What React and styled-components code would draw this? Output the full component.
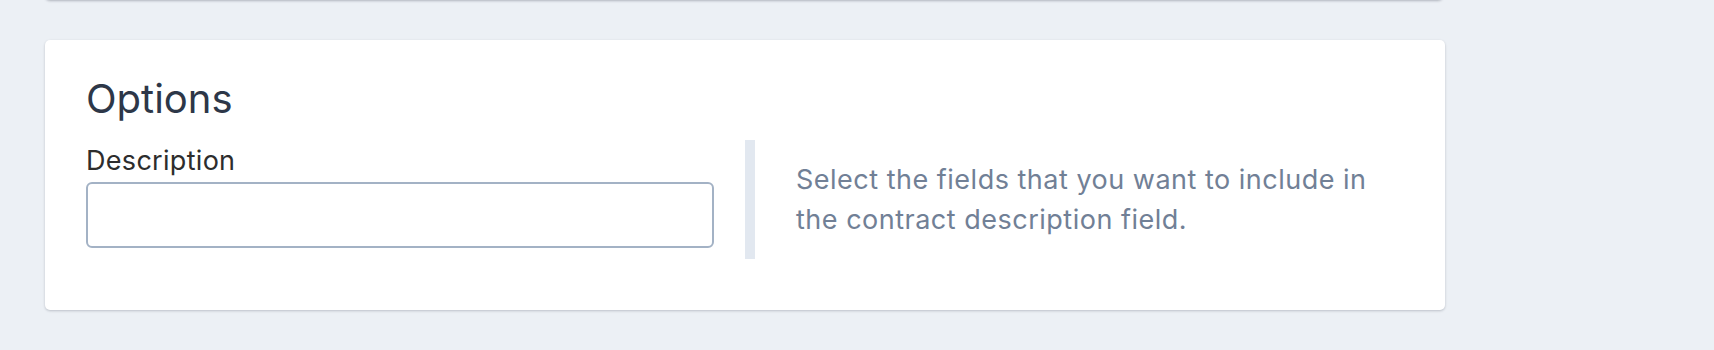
import React from "react";
import styled, { createGlobalStyle } from "styled-components";

const Global = createGlobalStyle`
  html, body {
    margin: 0;
    padding: 0;
    background: #ecf0f5;
    font-family: Inter, "Noto Sans", sans-serif;
    overflow: hidden;
  }
  * { box-sizing: border-box; }
`;

const Page = styled.div`
  display: flex;
  flex-direction: column;
  gap: 40px;
  padding: 0 0 40px 45px;
  width: 1445px;
`;

const TopCard = styled.div`
  height: 6px;
  margin-top: -6px;
  background: #ffffff;
  border-radius: 0 0 5px 5px;
  box-shadow: 0 1px 3px rgba(15, 23, 42, 0.18), 0 1px 2px rgba(15, 23, 42, 0.1);
  width: 1398px;
`;

const Card = styled.section`
  background: #ffffff;
  border-radius: 5px;
  box-shadow: 0 1px 3px rgba(15, 23, 42, 0.14), 0 1px 2px rgba(15, 23, 42, 0.08);
  padding: 35px 40px 51px 41px;
  width: 1400px;
`;

const Title = styled.h2`
  margin: 0 0 17px;
  font-size: 40px;
  line-height: 48px;
  font-weight: 400;
  color: #2d3748;
`;

const Row = styled.div`
  display: flex;
  align-items: stretch;
`;

const Field = styled.div`
  display: flex;
  flex-direction: column;
  width: 628px;
  padding-bottom: 11px;
`;

const Label = styled.label`
  font-size: 27px;
  line-height: 40px;
  letter-spacing: 0.3px;
  color: #2d2d2d;
  margin-top: 1px;
  margin-bottom: 1px;
`;

const Input = styled.input`
  height: 66px;
  border: 2px solid #a3b2c5;
  border-radius: 6px;
  background: #ffffff;
  font: inherit;
  font-size: 25px;
  padding: 0 16px;
  outline: none;
`;

const Divider = styled.div`
  width: 10px;
  background: #e2e8f0;
  margin-left: 31px;
  margin-right: 41px;
  flex: none;
`;

const Help = styled.p`
  margin: 0;
  align-self: center;
  width: 600px;
  font-size: 27px;
  line-height: 40px;
  letter-spacing: 0.5px;
  color: #718096;
`;

export default function App() {
  return (
    <>
      <Global />
      <Page>
        <TopCard />
        <Card>
          <Title>Options</Title>
          <Row>
            <Field>
              <Label htmlFor="desc">Description</Label>
              <Input id="desc" type="text" />
            </Field>
            <Divider />
            <Help>Select the fields that you want to include in the contract description field.</Help>
          </Row>
        </Card>
      </Page>
    </>
  );
}
